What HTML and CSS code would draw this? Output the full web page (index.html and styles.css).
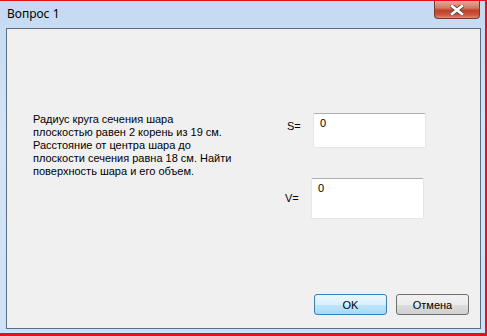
FILE: index.html
```html
<!DOCTYPE html>
<html lang="ru">
<head>
  <meta charset="UTF-8">
  <title>Вопрос 1</title>
  <link rel="stylesheet" href="styles.css">
</head>
<body>

  <div class="window">
    <div class="titlebar">
      <span class="title">Вопрос 1</span>
      <button class="close-btn" title="Закрыть">
        <svg width="14" height="10" viewBox="0 0 14 10">
          <path d="M2 1 L12 9 M12 1 L2 9" stroke="#5a4a48" stroke-width="4.4" stroke-linecap="square"/>
          <path d="M2 1 L12 9 M12 1 L2 9" stroke="#fff" stroke-width="2.6" stroke-linecap="square"/>
        </svg>
      </button>
    </div>

    <div class="client">
      <div class="main">
        <p class="question">Радиус круга сечения шара<br>
          плоскостью равен 2 корень из 19 см.<br>
          Расстояние от центра шара до<br>
          плоскости сечения равна 18 см. Найти<br>
          поверхность шара и его объем.</p>

        <div class="answers">
          <div class="answer-row row-s">
            <label class="answer-label">S=</label>
            <div class="answer-box box-s">0</div>
          </div>
          <div class="answer-row row-v">
            <label class="answer-label">V=</label>
            <div class="answer-box box-v">0</div>
          </div>
        </div>
      </div>

      <div class="buttons">
        <button class="btn btn-default">OK</button>
        <button class="btn">Отмена</button>
      </div>
    </div>
  </div>

</body>
</html>
```

FILE: styles.css
```css
body {
  margin: 0;
  padding: 0;
  font-family: 'Liberation Sans', Arial, sans-serif;
  background-color: #fff;
}

.window {
  box-sizing: border-box;
  width: 487px;
  height: 336px;
  border-top: 1px solid #e8101a;
  border-right: 2px solid #e8101a;
  border-bottom: 3px solid #e8101a;
  background: linear-gradient(to bottom, #c4daf2 0%, #d3e4f6 40%, #cfe1f5 100%);
  display: flex;
  flex-direction: column;
}

.titlebar {
  height: 27px;
  display: flex;
  justify-content: space-between;
  align-items: flex-start;
  padding-left: 7px;
  padding-right: 5px;
}

.title {
  font-family: 'Noto Sans', sans-serif;
  font-size: 12px;
  color: #000;
  margin-top: 4px;
}

.close-btn {
  width: 46px;
  height: 18px;
  padding: 0;
  border: 1px solid #7a3a30;
  border-top: none;
  border-radius: 0 0 4px 4px;
  background: linear-gradient(to bottom, #e6a89b 0%, #d77a66 40%, #c2412a 55%, #c9543c 80%, #dd8a74 100%);
  display: flex;
  align-items: center;
  justify-content: center;
}

.client {
  flex: 1;
  margin: 0 4px 4px 6px;
  border: 1px solid #5c6b7e;
  background-color: #f0f0f0;
  display: flex;
  flex-direction: column;
  font-family: 'Liberation Sans', Tahoma, sans-serif;
  font-size: 11px;
}

.main {
  flex: 1;
  display: flex;
}

.question {
  width: 200px;
  margin: 84px 0 0 26px;
  line-height: 13px;
  white-space: nowrap;
  color: #000;
}

.answers {
  margin-left: 52px;
  padding-top: 84px;
}

.answer-row {
  display: flex;
}

.row-v {
  margin-top: 30px;
}

.answer-label {
  width: 26px;
  color: #000;
}

.row-s .answer-label {
  padding-top: 7px;
  margin-left: 2px;
}

.row-v .answer-label {
  padding-top: 14px;
}

.answer-box {
  box-sizing: border-box;
  width: 113px;
  background-color: #fff;
  border: 1px solid #e2e7ee;
  border-top-color: #abadb3;
  border-radius: 2px;
  padding: 3px 6px;
  font-size: 11px;
  color: #000;
}

.box-s {
  height: 35px;
}

.box-v {
  height: 41px;
}

.buttons {
  display: flex;
  justify-content: flex-end;
  gap: 9px;
  padding: 0 11px 13px 0;
}

.btn {
  width: 73px;
  height: 21px;
  padding: 0;
  font-family: 'Liberation Sans', Tahoma, sans-serif;
  font-size: 11px;
  color: #000;
  border: 1px solid #707070;
  border-radius: 3px;
  background: linear-gradient(to bottom, #f2f2f2 0%, #ebebeb 50%, #dddddd 51%, #cfcfcf 100%);
}

.btn-default {
  border-color: #3c7fb1;
  background: linear-gradient(to bottom, #eaf6fd 0%, #d9f0fc 50%, #bee6fd 51%, #a7d9f5 100%);
}
```
